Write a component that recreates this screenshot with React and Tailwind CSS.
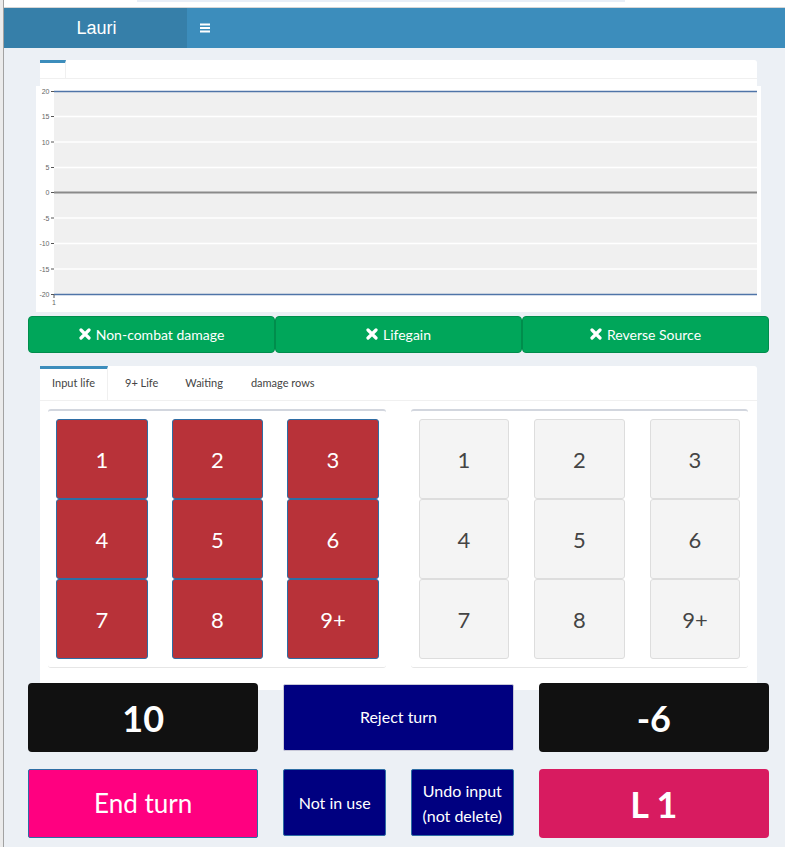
import React from "react";

const XIcon = () => (
  <svg width="12" height="12" viewBox="0 0 12 12" className="inline-block mr-[5px] mb-[2px]">
    <path d="M2 2L10 10M10 2L2 10" stroke="white" strokeWidth="3.2" strokeLinecap="round" />
  </svg>
);

const Chart = () => {
  const ticks = [
    [20, 5.5],
    [15, 30.5],
    [10, 56],
    [5, 81.5],
    [0, 106.5],
    [-5, 132],
    [-10, 157.5],
    [-15, 183],
    [-20, 208.5],
  ];
  return (
    <svg width="725" height="226" viewBox="0 0 725 226">
      <rect x="18" y="5" width="703" height="204" fill="#f0f0f0" />
      {ticks
        .filter(([v]) => v !== 0 && Math.abs(v) !== 20)
        .map(([v, y]) => (
          <line key={v} x1="18" x2="721" y1={y} y2={y} stroke="#ffffff" strokeWidth="1.3" />
        ))}
      <line x1="18" x2="721" y1="106.5" y2="106.5" stroke="#8a8a8a" strokeWidth="2" />
      <line x1="18" x2="721" y1="5.5" y2="5.5" stroke="#4f74a8" strokeWidth="1.4" />
      <line x1="18" x2="721" y1="208.5" y2="208.5" stroke="#4f74a8" strokeWidth="1.4" />
      {ticks.map(([v, y]) => (
        <g key={"t" + v}>
          <line x1="15" x2="18" y1={y} y2={y} stroke="#555" strokeWidth="1" />
          <text
            x="13.5"
            y={y + 2.5}
            textAnchor="end"
            fontSize="7"
            fill="#666"
            fontFamily="Liberation Sans, Arial, sans-serif"
          >
            {v}
          </text>
        </g>
      ))}
      <line x1="18" x2="18" y1="209" y2="212" stroke="#555" strokeWidth="1" />
      <text x="18" y="219" textAnchor="middle" fontSize="7" fill="#666" fontFamily="Liberation Sans, Arial, sans-serif">
        1
      </text>
    </svg>
  );
};

const keys = ["1", "2", "3", "4", "5", "6", "7", "8", "9+"];

export default function App() {
  return (
    <div
      className="w-[785px] h-[847px] overflow-hidden flex bg-[#ecf0f5]"
      style={{ fontFamily: "Lato, 'Noto Sans', sans-serif" }}
    >
      <div className="w-[4px] shrink-0 bg-[#ebebeb] border-r border-[#a2a2a2]" />
      <div className="flex-1 flex flex-col">
        <div className="h-[8px] bg-white border-b border-[#d6d6d6]">
          <div className="ml-[133px] w-[488px] h-[2px] bg-[#e8eef7]" />
        </div>
        <div className="h-[40px] flex">
          <div
            className="w-[183px] bg-[#367fa9] flex items-center justify-center text-white text-[18px] pl-[2px]"
            style={{ fontFamily: "'Liberation Sans', Arial, sans-serif" }}
          >
            Lauri
          </div>
          <div className="flex-1 bg-[#3c8dbc] flex items-center pl-[13px]">
            <svg width="10" height="10" viewBox="0 0 10 10">
              <rect x="0" y="0.5" width="10" height="2" fill="white" />
              <rect x="0" y="4" width="10" height="2" fill="white" />
              <rect x="0" y="7.5" width="10" height="2" fill="white" />
            </svg>
          </div>
        </div>

        <div className="ml-[24px] w-[741px] flex flex-col">
          {/* chart tab box */}
          <div className="mt-[12px] mx-[12px] bg-white rounded-[3px]">
            <div className="flex h-[19px] border-b border-[#f0f0f0]">
              <div className="w-[26px] border-t-[3px] border-t-[#3c8dbc] border-r border-r-[#f0f0f0]" />
            </div>
            <div className="h-[7px]" />
            <div className="-mx-[4px] bg-white h-[226px]">
              <Chart />
            </div>
          </div>

          {/* green buttons */}
          <div className="mt-[4px] grid grid-cols-3 h-[37px]">
            {["Non-combat damage", "Lifegain", "Reverse Source"].map((t) => (
              <div
                key={t}
                className="bg-[#00a65a] border border-[#008d4c] rounded-[4px] flex items-center justify-center text-white text-[14px]"
              >
                <XIcon />
                {t}
              </div>
            ))}
          </div>

          {/* input tab box */}
          <div className="mt-[13px] mx-[12px] bg-white rounded-[3px] h-[324px]">
            <div className="flex h-[35px] border-b border-[#f0f0f0] text-[11px] text-[#444]">
              <div className="w-[68px] border-t-[3px] border-t-[#3c8dbc] border-r border-r-[#f0f0f0] flex items-center justify-center pb-[2px]">
                Input life
              </div>
              <div className="pl-[17px] pr-[13px] flex items-center pt-[1px]">9+ Life</div>
              <div className="pl-[14px] pr-[14px] flex items-center pt-[1px]">Waiting</div>
              <div className="pl-[14px] flex items-center pt-[1px]">damage rows</div>
            </div>
            <div className="grid grid-cols-[338px_337px] gap-x-[25px] pl-[8px] mt-[8px]">
              <div className="border-t-2 border-t-[#d2d6de] border-b border-b-[#e6e6e6] rounded-[3px] pt-[8px] pb-[8px] pl-[8px]">
                <div className="grid grid-cols-[92px_91px_92px] gap-x-[24px]">
                  {keys.map((k) => (
                    <div
                      key={k}
                      className="h-[80px] bg-[#b83239] border border-[#2e6da4] rounded-[3px] flex items-center justify-center text-white text-[22px]"
                    >
                      {k}
                    </div>
                  ))}
                </div>
              </div>
              <div className="border-t-2 border-t-[#d2d6de] border-b border-b-[#e6e6e6] rounded-[3px] pt-[8px] pb-[8px] pl-[8px]">
                <div className="grid grid-cols-[90px_91px_90px] gap-x-[25px]">
                  {keys.map((k) => (
                    <div
                      key={k}
                      className="h-[80px] bg-[#f4f4f4] border border-[#dddddd] rounded-[3px] flex items-center justify-center text-[#444] text-[22px]"
                    >
                      {k}
                    </div>
                  ))}
                </div>
              </div>
            </div>
          </div>

          {/* bottom controls */}
          <div className="-mt-[7px] grid grid-cols-3 gap-x-[25px] relative">
            <div className="h-[69px] bg-[#111111] rounded-[4px] flex items-center justify-center text-white text-[36px] font-bold">
              10
            </div>
            <div className="mt-[1px] h-[67px] bg-[#000080] border border-[#c8c8d8] rounded-[2px] flex items-center justify-center text-white text-[16px] pb-[2px]">
              Reject turn
            </div>
            <div className="h-[69px] bg-[#111111] rounded-[4px] flex items-center justify-center text-white text-[36px] font-bold">
              -6
            </div>
          </div>
          <div className="mt-[17px] grid grid-cols-3 gap-x-[25px]">
            <div className="h-[69px] bg-[#ff0080] border border-[#2e6da4] rounded-[2px] flex items-center justify-center text-white text-[26px]">
              End turn
            </div>
            <div className="grid grid-cols-2 gap-x-[25px]">
              <div className="h-[67px] bg-[#000080] border border-[#2e6da4] rounded-[2px] flex items-center justify-center text-white text-[16px]">
                Not in use
              </div>
              <div className="h-[67px] bg-[#000080] border border-[#2e6da4] rounded-[2px] flex items-center justify-center text-center text-white text-[16px] leading-[25px]">
                Undo input
                <br />
                (not delete)
              </div>
            </div>
            <div className="h-[69px] bg-[#d81b60] rounded-[4px] flex items-center justify-center text-white text-[36px] font-bold">
              L 1
            </div>
          </div>
        </div>
      </div>
    </div>
  );
}
